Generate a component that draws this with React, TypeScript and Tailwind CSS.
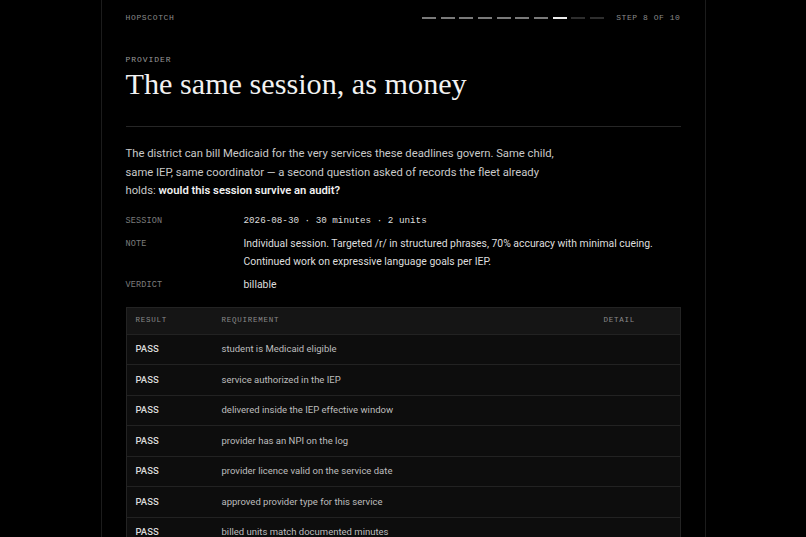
const mono = "font-['Liberation_Mono','DejaVu_Sans_Mono',monospace]";
const sans = "font-['Roboto','Liberation_Sans',sans-serif]";
const serif = "font-['Liberation_Serif','DejaVu_Serif',serif]";

const checks = [
  "student is Medicaid eligible",
  "service authorized in the IEP",
  "delivered inside the IEP effective window",
  "provider has an NPI on the log",
  "provider licence valid on the service date",
  "approved provider type for this service",
  "billed units match documented minutes",
  "session note is signed and dated",
];

function StepBars({ current, total }: { current: number; total: number }) {
  return (
    <div className="flex items-center gap-[4.7px]">
      {Array.from({ length: total }).map((_, i) => (
        <div
          key={i}
          className={
            i + 1 === current
              ? "h-[2px] w-[14px] bg-[#ececec]"
              : i + 1 < current
              ? "h-[2px] w-[14px] bg-[#7a7a7a]"
              : "h-[2px] w-[14px] bg-[#2e2e2e]"
          }
        />
      ))}
    </div>
  );
}

function Field({ label, children }: { label: string; children: React.ReactNode }) {
  return (
    <div className="flex">
      <div className={`${mono} w-[118px] shrink-0 pt-[3px] text-[8.5px] tracking-[0.02em] text-[#7c7c7c]`}>
        {label}
      </div>
      <div className="flex-1">{children}</div>
    </div>
  );
}

export default function App() {
  return (
    <div className="min-h-screen bg-black">
      <div className="mx-auto min-h-screen w-[605px] border-x border-[#1c1c1c] px-[24px]">
        {/* top bar */}
        <div className="flex h-[36px] items-center justify-between">
          <span className={`${mono} text-[8px] tracking-[0.08em] text-[#8a8a8a]`}>HOPSCOTCH</span>
          <div className="flex items-center gap-[12px]">
            <StepBars current={8} total={10} />
            <span className={`${mono} text-[8px] tracking-[0.07em] text-[#8a8a8a]`}>STEP 8 OF 10</span>
          </div>
        </div>

        <div className={`${mono} mt-[18px] text-[8px] leading-[12px] tracking-[0.12em] text-[#9a9a9a]`}>PROVIDER</div>
        <h1 className={`${serif} text-[30.2px] leading-[36px] text-[#f2f2f2]`}>
          The same session, as money
        </h1>

        <div className="mt-[24px] h-px bg-[#262626]" />

        <p className={`${sans} mt-[18px] max-w-[432px] text-[11.25px] leading-[18.5px] text-[#c9c9c9]`}>
          The district can bill Medicaid for the very services these deadlines govern. Same child, same IEP,
          same coordinator — a second question asked of records the fleet already holds:{" "}
          <b className="font-semibold text-[#f0f0f0]">would this session survive an audit?</b>
        </p>

        <div className="mt-[11px] flex flex-col gap-[5px]">
          <Field label="SESSION">
            <div className={`${mono} text-[9.25px] leading-[18px] text-[#dedede]`}>
              2026-08-30 · 30 minutes · 2 units
            </div>
          </Field>
          <Field label="NOTE">
            <div className={`${sans} whitespace-nowrap text-[10.4px] leading-[18px] text-[#dedede]`}>
              Individual session. Targeted /r/ in structured phrases, 70% accuracy with minimal cueing.
              <br />
              Continued work on expressive language goals per IEP.
            </div>
          </Field>
          <Field label="VERDICT">
            <div className={`${sans} text-[10.4px] leading-[18px] text-[#dedede]`}>billable</div>
          </Field>
        </div>

        {/* checks table */}
        <div className="mt-[13px] border border-[#232323] bg-[#0d0d0d]">
          <div className={`${mono} grid h-[26px] grid-cols-[86px_382px_1fr] items-center bg-[#151515] pl-[9px] text-[7.5px] tracking-[0.1em] text-[#8a8a8a]`}>
            <span>RESULT</span>
            <span>REQUIREMENT</span>
            <span>DETAIL</span>
          </div>
          {checks.map((c) => (
            <div
              key={c}
              className={`${sans} grid h-[30.5px] grid-cols-[86px_382px_1fr] items-center border-t border-[#222] pl-[9px]`}
            >
              <span className="text-[9.5px] font-medium text-[#dadada]">PASS</span>
              <span className="text-[9.5px] text-[#bdbdbd]">{c}</span>
              <span />
            </div>
          ))}
        </div>
      </div>
    </div>
  );
}
